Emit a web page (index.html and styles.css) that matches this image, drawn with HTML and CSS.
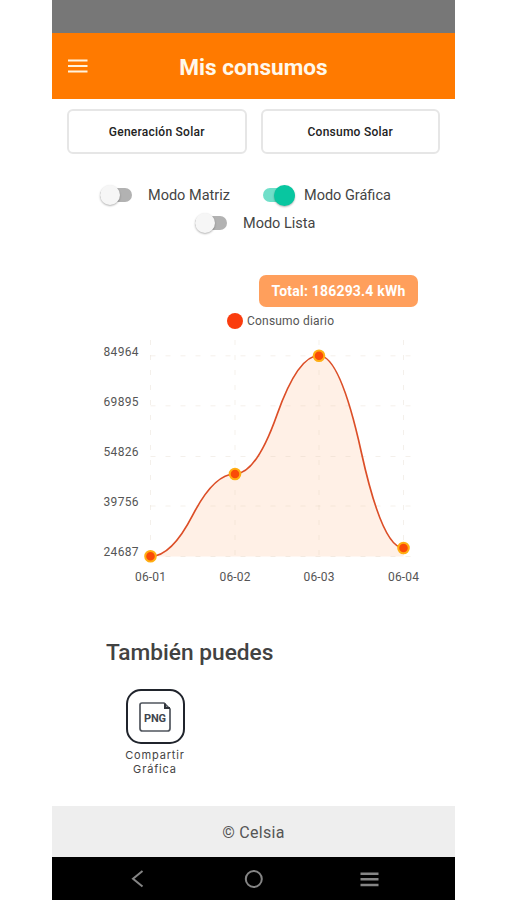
FILE: index.html
```html
<!DOCTYPE html>
<html lang="es">
  <head>
    <meta charset="UTF-8" />
    <meta name="viewport" content="width=device-width, initial-scale=1.0" />
    <title>Mis consumos</title>
    <link rel="stylesheet" href="styles.css">
  </head>
  <body>
    <div class="phone">
      <div class="status-bar"></div>

      <header class="header">
        <svg class="menu-icon" width="20" height="14" viewBox="0 0 20 14">
          <path d="M0 1.5h19.5M0 7h19.5M0 12.5h19.5" stroke="#fff3df" stroke-width="2.2" />
        </svg>
        <h1>Mis consumos</h1>
      </header>

      <div class="tabs">
        <button class="tab">Generación Solar</button>
        <button class="tab">Consumo Solar</button>
      </div>

      <div class="modes">
        <div class="mode-row">
          <span class="switch"></span>
          <span class="mode-label matrix">Modo Matriz</span>
          <span class="switch on"></span>
          <span class="mode-label graph">Modo Gráfica</span>
        </div>
        <div class="mode-row second">
          <span class="switch"></span>
          <span class="mode-label">Modo Lista</span>
        </div>
      </div>

      <div class="total">Total: 186293.4 kWh</div>

      <div class="legend">
        <span class="legend-dot"></span>
        <span>Consumo diario</span>
      </div>

      <svg class="chart" width="403" height="258" viewBox="52 334 403 258">
        <!-- area -->
        <path class="area" d="M150.5 556.5Q171.5 556.5 192.7 515.2T235 474Q256 474 277 414.7T319 355.5Q340 355.5 361.2 451.7T403.5 548V556.5Z" />
        <!-- grid -->
        <g class="grid">
          <path d="M150.5 355.8H420M150.5 405.8H420M150.5 456.5H420M150.5 506H420M150.5 556.5H420" />
          <path d="M150.5 340V556M235 340V556M319 340V556M403.5 340V556" />
        </g>
        <path class="line" d="M150.5 556.5Q171.5 556.5 192.7 515.2T235 474Q256 474 277 414.7T319 355.5Q340 355.5 361.2 451.7T403.5 548" />
        <g class="dots">
          <circle cx="150.5" cy="556.3" r="5.3" />
          <circle cx="235" cy="474" r="5.3" />
          <circle cx="319" cy="355.8" r="5.3" />
          <circle cx="403.5" cy="548" r="5.3" />
        </g>
        <g class="axis">
          <text x="103.5" y="356" textLength="35">84964</text>
          <text x="103.5" y="406" textLength="35">69895</text>
          <text x="103.5" y="456" textLength="35">54826</text>
          <text x="103.5" y="506" textLength="35">39756</text>
          <text x="103.5" y="556" textLength="35">24687</text>
          <text x="135" y="581" textLength="31">06-01</text>
          <text x="219.5" y="581" textLength="31">06-02</text>
          <text x="303.5" y="581" textLength="31">06-03</text>
          <text x="388" y="581" textLength="31">06-04</text>
        </g>
      </svg>

      <section class="actions">
        <h2>También puedes</h2>
        <div class="share">
          <div class="share-box">
            <svg width="32" height="30" viewBox="0 0 32 30">
              <path d="M3 1H25L31 7V26.5Q31 29 28.5 29H3.5Q1 29 1 26.5V3Q1 1 3 1Z" fill="none" stroke="#50555d" stroke-width="1.7" />
              <path d="M26 1.5V6H31" fill="none" stroke="#30343b" stroke-width="2" />
              <text x="5" y="19.5" textLength="22">PNG</text>
            </svg>
          </div>
          <div class="share-label">Compartir<br>Gráfica</div>
        </div>
      </section>

      <footer class="footer">© Celsia</footer>

      <nav class="nav-bar">
        <svg width="403" height="43" viewBox="0 0 403 43">
          <g fill="none" stroke="#858585" stroke-width="2">
            <path d="M90.5 14L81 21.8L90.5 29.5" />
            <circle cx="201.8" cy="22" r="8" />
            <path d="M308.5 16.7H326.5M308.5 22.3H326.5M308.5 28H326.5" stroke-width="2.6" />
          </g>
        </svg>
      </nav>
    </div>
  </body>
</html>
```

FILE: styles.css
```css
* {
  box-sizing: border-box;
}

body {
  margin: 0;
  background: #fff;
  font-family: Roboto, "Liberation Sans", sans-serif;
}

.phone {
  width: 403px;
  height: 900px;
  margin-left: 52px;
  display: flex;
  flex-direction: column;
  overflow: hidden;
}

.status-bar {
  height: 33px;
  background: #777;
}

.header {
  height: 66px;
  background: #ff7a00;
  display: grid;
  grid-template-columns: 52px 1fr 52px;
  align-items: center;
}

.menu-icon {
  margin-left: 16px;
}

.header h1 {
  margin: 4px 0 0;
  text-align: center;
  color: #fff8eb;
  font-size: 22.6px;
  line-height: 28px;
  font-weight: 700;
}

.tabs {
  display: flex;
  gap: 14px;
  padding: 10px 15px 0;
}

.tab {
  flex: 1;
  height: 45px;
  padding: 0;
  border: 2px solid #e6e6e6;
  border-radius: 6px;
  background: #fff;
  color: #222;
  font-family: inherit;
  font-size: 12px;
  font-weight: 500;
  letter-spacing: 0.25px;
}

.modes {
  margin-top: 27px;
}

.mode-row {
  height: 28px;
  padding-left: 48px;
  display: flex;
  align-items: center;
}

.mode-row.second {
  padding-left: 143px;
}

.switch {
  width: 32px;
  height: 14px;
  border-radius: 7px;
  background: #b2b2b2;
  display: flex;
  align-items: center;
}

.switch::before {
  content: "";
  flex: none;
  width: 20px;
  height: 20px;
  border-radius: 50%;
  background: #f6f6f6;
  box-shadow: 0 1px 2px rgba(0, 0, 0, 0.3);
}

.switch.on {
  margin-left: 33px;
  justify-content: flex-end;
  background: #70dfc9;
}

.switch.on::before {
  width: 21px;
  height: 21px;
  background: #08c6a0;
}

.mode-label {
  margin-left: 16px;
  color: #444;
  font-size: 14.5px;
  white-space: nowrap;
}

.matrix {
  width: 82px;
}

.graph {
  margin-left: 9px;
}

.total {
  align-self: flex-end;
  margin: 38px 37px 0 0;
  width: 159px;
  height: 32px;
  border-radius: 7px;
  background: #ff9f5c;
  color: #fff;
  font-size: 14px;
  line-height: 33px;
  font-weight: 700;
  letter-spacing: 0.2px;
  text-align: center;
}

.legend {
  height: 27px;
  padding-left: 175px;
  display: flex;
  align-items: center;
  gap: 4px;
  color: #555;
  font-size: 12px;
  line-height: 16px;
  letter-spacing: 0.2px;
}

.legend-dot {
  width: 16px;
  height: 16px;
  border-radius: 50%;
  background: #fa3c0e;
}

.chart {
  flex: none;
}

.area {
  fill: #fff0e6;
}

.grid {
  fill: none;
  stroke: #d8c8b8;
  stroke-opacity: 0.28;
  stroke-dasharray: 5 10;
}

.line {
  fill: none;
  stroke: #dc4e27;
  stroke-width: 1.7;
}

.dots {
  fill: #fa4b08;
  stroke: #ffae12;
  stroke-width: 2;
}

.axis {
  fill: #555;
  font-size: 12px;
}

.actions {
  padding: 46px 53px 0 54px;
}

.actions h2 {
  margin: 0;
  color: #424242;
  font-size: 22.7px;
  line-height: 30px;
  font-weight: 500;
}

.share {
  width: 80px;
  margin: 21px 0 0 9px;
  display: flex;
  flex-direction: column;
  align-items: center;
}

.share-box {
  width: 59px;
  height: 55px;
  border: 2px solid #20242c;
  border-radius: 15px;
  display: flex;
  align-items: center;
  justify-content: center;
}

.share-box text {
  fill: #40454e;
  font-size: 11px;
  font-weight: 700;
}

.share-label {
  margin-top: 5px;
  color: #444;
  font-family: Inter, sans-serif;
  font-size: 11px;
  line-height: 13.5px;
  letter-spacing: 0.85px;
  text-align: center;
}

.footer {
  height: 51px;
  margin-top: auto;
  background: #eee;
  color: #555;
  font-size: 16px;
  line-height: 53px;
  letter-spacing: 0.3px;
  text-align: center;
}

.nav-bar {
  height: 43px;
  background: #000;
}

.nav-bar svg {
  display: block;
}
```
